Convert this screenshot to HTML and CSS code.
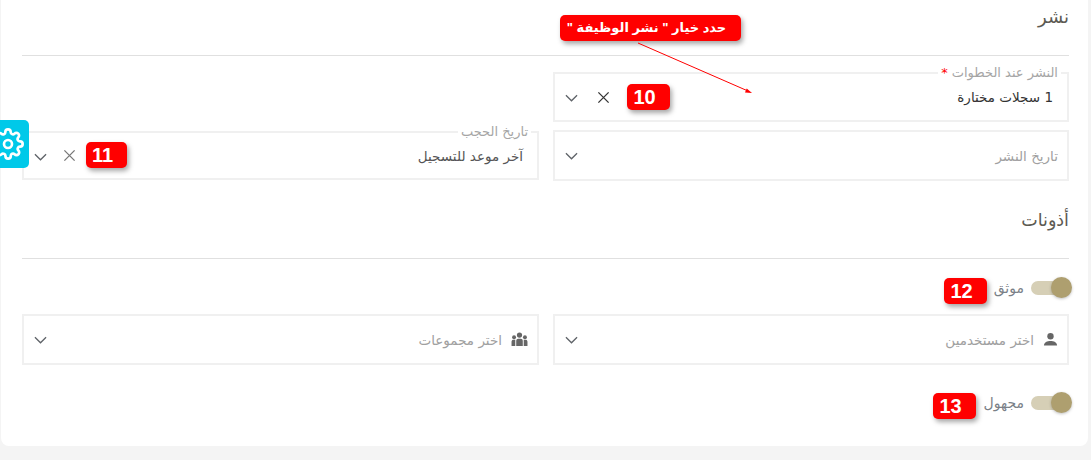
FILE: index.html
```html
<!DOCTYPE html>
<html lang="ar" dir="rtl">
<head>
<meta charset="utf-8">
<title>نشر</title>
<link rel="stylesheet" href="styles.css">
</head>
<body>
<main class="card">
  <h2 class="section-title section-title--first">نشر</h2>
  <div class="grid grid--publish">
    <div class="field">
      <span class="legend">النشر عند الخطوات <em>*</em></span>
      <span class="value">1 سجلات مختارة</span>
      <svg class="icon-x icon-x--dark" viewBox="0 0 14 14"><path d="M1.5 1.5l11 11M12.5 1.5l-11 11"/></svg>
      <svg class="chev" viewBox="0 0 14 8"><path d="M1 1l6 6 6-6"/></svg>
    </div>
    <div class="spacer"></div>
    <div class="field field--tall">
      <span class="placeholder placeholder--bare">تاريخ النشر</span>
      <svg class="chev" viewBox="0 0 14 8"><path d="M1 1l6 6 6-6"/></svg>
    </div>
    <div class="field field--short">
      <span class="legend">تاريخ الحجب</span>
      <span class="value value--soft">آخر موعد للتسجيل</span>
      <svg class="icon-x" viewBox="0 0 14 14"><path d="M1.5 1.5l11 11M12.5 1.5l-11 11"/></svg>
      <svg class="chev" viewBox="0 0 14 8"><path d="M1 1l6 6 6-6"/></svg>
    </div>
  </div>

  <h2 class="section-title section-title--second">أذونات</h2>
  <div class="toggle-row toggle-row--first">
    <span class="toggle"><span class="knob"></span></span>
    <span class="toggle-label">موثق</span>
  </div>
  <div class="grid grid--perms">
    <div class="field field--tall">
      <svg class="lead" viewBox="0 0 16 16"><circle cx="8" cy="4.5" r="3.4"/><path d="M1 14.5c0-3.6 3.5-5 7-5s7 1.400 7 5z"/></svg>
      <span class="placeholder">اختر مستخدمين</span>
      <svg class="chev" viewBox="0 0 14 8"><path d="M1 1l6 6 6-6"/></svg>
    </div>
    <div class="field field--tall">
      <svg class="lead lead--group" viewBox="0 0 18 16"><circle cx="9" cy="3.300" r="2.800"/><circle cx="3.200" cy="5.500" r="2.100"/><circle cx="14.800" cy="5.500" r="2.100"/><path d="M5.500 15V9.500c0-1.500 1-2.300 2-2.300h3c1 0 2 .8 2 2.300V15z"/><path d="M.5 15v-4.500c0-1.500 1-2.200 2-2.200h2V15zM17.500 15v-4.500c0-1.500-1-2.200-2-2.200h-2V15z"/></svg>
      <span class="placeholder">اختر مجموعات</span>
      <svg class="chev" viewBox="0 0 14 8"><path d="M1 1l6 6 6-6"/></svg>
    </div>
  </div>
  <div class="toggle-row toggle-row--second">
    <span class="toggle"><span class="knob"></span></span>
    <span class="toggle-label">مجهول</span>
  </div>
</main>

<button class="gear" type="button" aria-label="settings">
  <svg viewBox="0 0 24 24"><circle cx="12" cy="12" r="3"/><path d="M19.4 15a1.65 1.65 0 0 0 .33 1.82l.06.06a2 2 0 0 1 0 2.83 2 2 0 0 1-2.83 0l-.06-.06a1.65 1.65 0 0 0-1.82-.33 1.65 1.65 0 0 0-1 1.51V21a2 2 0 0 1-2 2 2 2 0 0 1-2-2v-.09A1.65 1.65 0 0 0 9 19.4a1.65 1.65 0 0 0-1.82.33l-.06.06a2 2 0 0 1-2.83 0 2 2 0 0 1 0-2.83l.06-.06a1.65 1.65 0 0 0 .33-1.82 1.65 1.65 0 0 0-1.51-1H3a2 2 0 0 1-2-2 2 2 0 0 1 2-2h.09A1.65 1.65 0 0 0 4.600 9a1.65 1.65 0 0 0-.33-1.82l-.06-.06a2 2 0 0 1 0-2.83 2 2 0 0 1 2.83 0l.06.06a1.65 1.65 0 0 0 1.820.33H9a1.65 1.65 0 0 0 1-1.51V3a2 2 0 0 1 2-2 2 2 0 0 1 2 2v.09a1.65 1.65 0 0 0 1 1.51 1.65 1.65 0 0 0 1.820-.33l.06-.06a2 2 0 0 1 2.83 0 2 2 0 0 1 0 2.83l-.06.06a1.65 1.65 0 0 0-.33 1.820V9a1.65 1.65 0 0 0 1.510 1H21a2 2 0 0 1 2 2 2 2 0 0 1-2 2h-.09a1.65 1.65 0 0 0-1.510 1z"/></svg>
</button>

<div class="note note--hint">حدد خيار " نشر الوظيفة "</div>
<div class="note note--10" dir="ltr">10</div>
<div class="note note--11" dir="ltr">11</div>
<div class="note note--12" dir="ltr">12</div>
<div class="note note--13" dir="ltr">13</div>
<svg class="arrow" viewBox="0 0 130 60"><path class="arrow-line" d="M8 3L118 51"/><path class="arrow-head" d="M122 53l-7-.6 1.700-4z"/></svg>
</body>
</html>
```

FILE: styles.css
```css
* { box-sizing: border-box; }

html, body {
  margin: 0;
  height: 460px;
  overflow: hidden;
}

body {
  position: relative;
  background: #f4f4f4;
  font-family: "DejaVu Sans", "Noto Sans", sans-serif;
  color: #4a4a4a;
}

.card {
  margin-right: 3px;
  width: 1087px;
  height: 446px;
  padding: 0 19px 0 21px;
  background: #fff;
  border-radius: 0 0 8px 8px;
}

.section-title {
  margin: 0;
  font-size: 18px;
  font-weight: 400;
  color: #5c5a52;
  border-bottom: 1px solid #e0e0e0;
}

.section-title--first {
  height: 56px;
  padding-top: 6px;
}

.section-title--second {
  height: 78px;
  padding-top: 29px;
  font-size: 17.500px;
}

.grid {
  display: grid;
  grid-template-columns: 516px 517px;
  column-gap: 14px;
}

.grid--publish {
  margin-top: 16px;
  row-gap: 8px;
}

.field {
  position: relative;
  display: flex;
  align-items: center;
  gap: 8px;
  height: 50px;
  padding: 0 14px 0 10px;
  border: 2px solid #f0f0f0;
  background: #fff;
}

.field--tall { height: 51px; }

.field--tall .chev { margin-top: 0; }

.field--short {
  height: 49px;
  align-self: center;
}

.legend {
  position: absolute;
  top: -9px;
  right: 6px;
  padding: 0 3px;
  background: #fff;
  font-size: 13px;
  line-height: 16px;
  color: #a5a5a5;
  white-space: nowrap;
}

.legend em {
  font-style: normal;
  color: #f00;
}

.value {
  flex: 1;
  font-size: 13.500px;
  color: #333;
}

.value--soft { color: #555; }

.placeholder {
  flex: 1;
  font-size: 13.500px;
  color: #a0a0a0;
}

.placeholder--bare { margin-right: -5px; }

.chev {
  flex: none;
  width: 13px;
  height: 8px;
  margin-top: 2px;
  fill: none;
  stroke: #5f6368;
  stroke-width: 1.400;
}

.icon-x {
  flex: none;
  width: 13px;
  height: 13px;
  margin-left: 8px;
  fill: none;
  stroke: #777;
  stroke-width: 1.400;
}

.icon-x--dark {
  margin-left: 11px;
  stroke: #333;
}

.lead {
  flex: none;
  width: 15px;
  height: 15px;
  margin-right: -5px;
  margin-left: 1px;
  fill: #666;
}

.lead--group { width: 17px; }

.toggle-row {
  display: flex;
  align-items: center;
  margin-right: -3px;
  height: 21px;
  gap: 7px;
}

.toggle-row--first { margin-top: 18px; margin-bottom: 16px; }
.toggle-row--second { margin-top: 27px; }

.toggle {
  position: relative;
  display: block;
  flex: none;
  width: 38px;
  height: 14px;
  margin-right: 3px;
  border-radius: 7px;
  background: #d6cfb6;
}

.knob {
  position: absolute;
  top: -3.500px;
  right: -3px;
  width: 21px;
  height: 21px;
  border-radius: 50%;
  background: #ae9f6f;
  box-shadow: 0 1px 3px rgba(0, 0, 0, .25);
}

.toggle-label {
  font-size: 14px;
  color: #7a7f87;
}

.gear {
  position: absolute;
  left: 0;
  top: 120px;
  width: 29px;
  height: 48px;
  padding: 0;
  border: 0;
  border-radius: 0 5px 5px 0;
  background: #00c9e9;
  overflow: hidden;
}

.gear svg {
  position: absolute;
  left: -8px;
  top: 8px;
  width: 32px;
  height: 32px;
  fill: none;
  stroke: #fff;
  stroke-width: 2;
}

.note {
  position: absolute;
  display: flex;
  align-items: center;
  justify-content: center;
  height: 26px;
  background: #f00;
  border-radius: 5px;
  box-shadow: 2px 3px 5px rgba(0, 0, 0, .35);
  color: #fff;
  font-family: "Liberation Sans", "DejaVu Sans", sans-serif;
  font-weight: 700;
  white-space: nowrap;
}

.note--hint { left: 560px; top: 15px; width: 181px; font-size: 13px; padding-bottom: 2px; padding-right: 8px; }
.note--10 { left: 627px; top: 84px; width: 43px; font-size: 20px; padding-right: 8px; }
.note--11 { left: 86px; top: 142px; width: 41px; font-size: 20px; padding-right: 8px; }
.note--12 { left: 944px; top: 278px; width: 43px; font-size: 20px; padding-right: 8px; }
.note--13 { left: 933px; top: 393px; width: 43px; font-size: 20px; padding-right: 8px; }

.arrow {
  position: absolute;
  left: 630px;
  top: 40px;
  width: 130px;
  height: 60px;
}

.arrow-line { fill: none; stroke: #f00; stroke-width: 1; }
.arrow-head { fill: #f00; }
```
